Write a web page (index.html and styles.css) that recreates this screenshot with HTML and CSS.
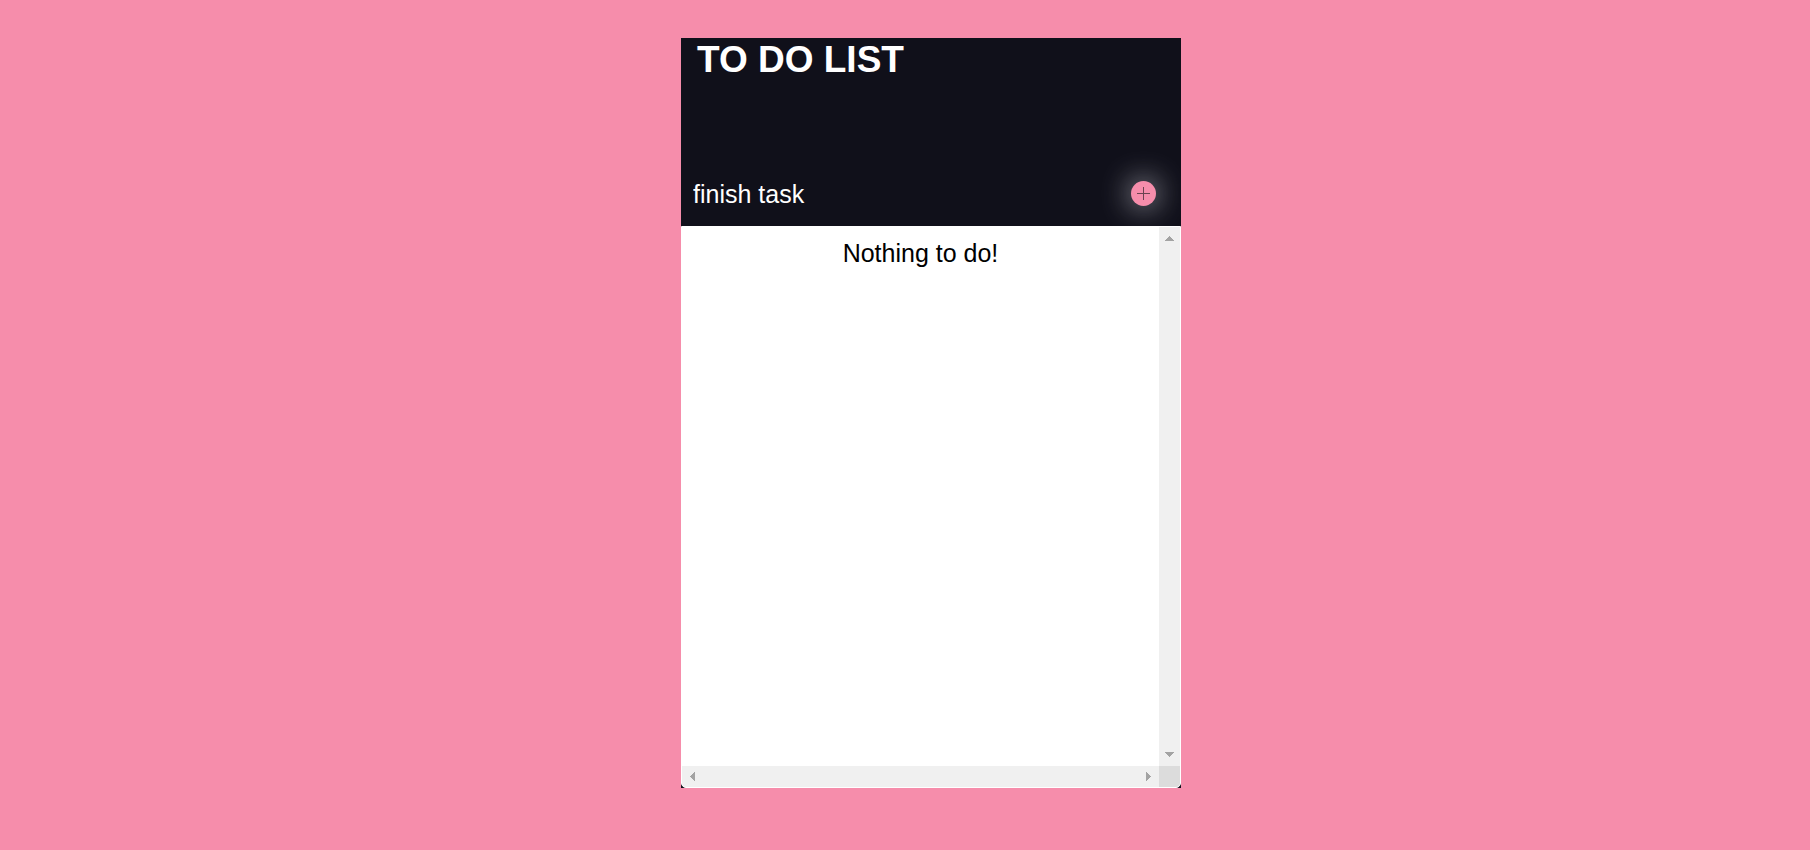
FILE: index.html
```html
<!DOCTYPE html>
<html lang="en">
<head>
<meta charset="utf-8">
<title>To do list</title>
<link rel="stylesheet" href="styles.css">
</head>
<body>
<main class="card">
  <header class="header">
    <h1 class="title">TO DO LIST</h1>
    <form class="entry">
      <input class="task" type="text" value="finish task" aria-label="New task">
      <button class="add" type="button" aria-label="Add task">
        <svg class="plus" viewBox="0 0 13 13" aria-hidden="true"><path d="M6 0h1v13H6zM0 6h13v1H0z"/></svg>
      </button>
    </form>
  </header>
  <section class="list">
    <p class="empty">Nothing to do!</p>
    <div class="bar vertical">
      <button class="arrow" type="button" aria-label="Scroll up"><svg viewBox="0 0 21 21"><path d="M10 9h1v1h1v1h1v1h1v1h1v1H6v-1h1v-1h1v-1h1v-1h1z"/></svg></button>
      <button class="arrow" type="button" aria-label="Scroll down"><svg viewBox="0 0 21 21"><path d="M6 7h9v1h-1v1h-1v1h-1v1h-1v1h-1v-1H9v-1H8V9H7V8H6z"/></svg></button>
    </div>
    <div class="bar">
      <button class="arrow" type="button" aria-label="Scroll left"><svg viewBox="0 0 21 21"><path d="M8 10h1V9h1V8h1V7h1V6h1v9h-1v-1h-1v-1h-1v-1H9v-1H8z"/></svg></button>
      <button class="arrow" type="button" aria-label="Scroll right"><svg viewBox="0 0 21 21"><path d="M8 6h1v1h1v1h1v1h1v1h1v1h-1v1h-1v1h-1v1H9v1H8z"/></svg></button>
    </div>
    <div class="corner"></div>
  </section>
</main>
</body>
</html>
```
FILE: styles.css
```css
* {
  box-sizing: border-box;
}

body {
  min-height: 100vh;
  margin: 0;
  padding: 38px 0 62px;
  display: flex;
  justify-content: center;
  background: #f68dab;
  font-family: "Liberation Sans", Arial, sans-serif;
  font-size: 25px;
}

.card {
  width: 100%;
  max-width: 500px;
  margin-left: 52px;
  display: flex;
  flex-direction: column;
  background: #10101a;
}

.header {
  display: flex;
  flex-direction: column;
  gap: 92px;
  padding-bottom: 13px;
}

.title {
  margin: 0;
  padding: 0 16px;
  color: #fff;
  font-size: 37px;
  line-height: 44px;
}

.entry {
  display: flex;
  align-items: center;
  padding: 0 25px 0 12px;
}

.task {
  flex: 1;
  min-width: 0;
  height: 39px;
  padding: 2px 0 0;
  border: 0;
  outline: 0;
  background: transparent;
  color: #fff;
  font: inherit;
}

.add {
  display: grid;
  place-items: center;
  width: 25px;
  height: 25px;
  padding: 0;
  border: 0;
  border-radius: 50%;
  background: #f68dab;
  box-shadow: 0 0 30px #c8c8d0;
}

.plus {
  width: 13px;
  height: 13px;
  fill: #6b4350;
}

.list {
  flex: 1;
  display: grid;
  grid-template: 1fr 21px / 1fr 21px;
  overflow: hidden;
  border: 1px solid #fff;
  border-radius: 0 0 5px 5px;
  background: #fff;
}

.empty {
  margin: 0;
  padding-top: 12px;
  line-height: 29px;
  text-align: center;
}

.bar {
  display: flex;
  justify-content: space-between;
  background: #f0f0f0;
}

.vertical {
  flex-direction: column;
}

.arrow {
  display: block;
  width: 21px;
  height: 21px;
  padding: 0;
  border: 0;
  background: transparent;
}

.arrow svg {
  display: block;
  fill: #a3a3a3;
}

.corner {
  background: #dcdcdc;
}
```
